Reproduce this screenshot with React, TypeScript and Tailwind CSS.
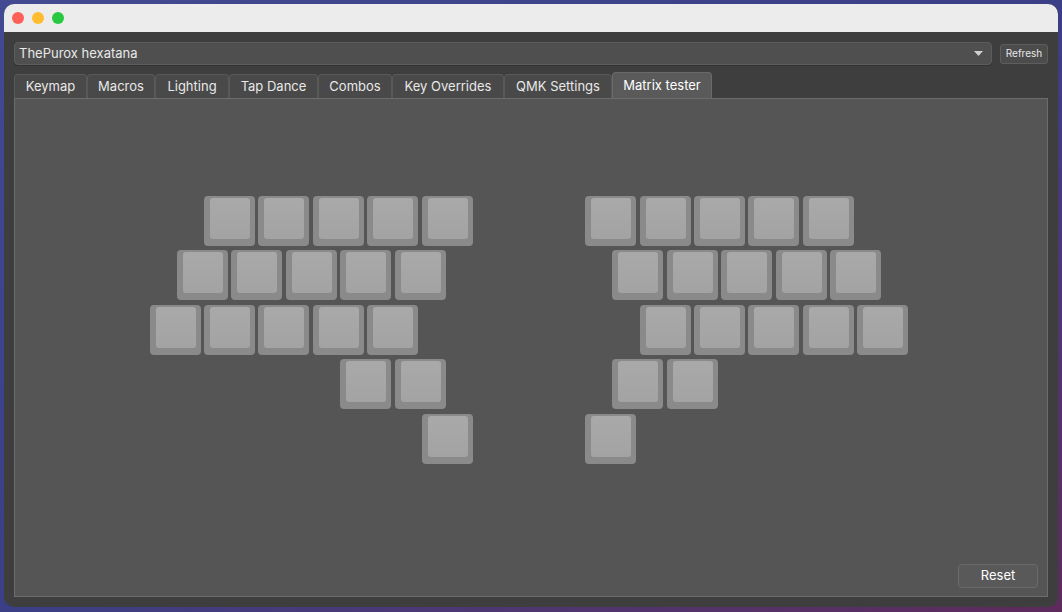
const tabs = [
  { label: "Keymap", w: "w-[73px]" },
  { label: "Macros", w: "w-[68px]" },
  { label: "Lighting", w: "w-[74px]" },
  { label: "Tap Dance", w: "w-[89px]" },
  { label: "Combos", w: "w-[74px]" },
  { label: "Key Overrides", w: "w-[112px]" },
  { label: "QMK Settings", w: "w-[108px]" },
];

const U = 54.45;

// [column in units, row]
const keys: [number, number][] = [
  [1, 0], [2, 0], [3, 0], [4, 0], [5, 0],
  [0.5, 1], [1.5, 1], [2.5, 1], [3.5, 1], [4.5, 1],
  [0, 2], [1, 2], [2, 2], [3, 2], [4, 2],
  [3.5, 3], [4.5, 3],
  [5, 4],
  [8, 0], [9, 0], [10, 0], [11, 0], [12, 0],
  [8.5, 1], [9.5, 1], [10.5, 1], [11.5, 1], [12.5, 1],
  [9, 2], [10, 2], [11, 2], [12, 2], [13, 2],
  [8.5, 3], [9.5, 3],
  [8, 4],
];

function Key({ x, y }: { x: number; y: number }) {
  return (
    <div
      className="absolute h-[50px] w-[51px] rounded-[4px] bg-[#8a8a8a] pb-[7px] pl-[6px] pr-[5px] pt-[2px]"
      style={{ left: Math.floor(x * U), top: Math.round(y * U) }}
    >
      <div className="h-full w-full rounded-[3px] bg-gradient-to-b from-[#a9a9a9] to-[#a3a3a3]" />
    </div>
  );
}

export default function App() {
  return (
    <div
      className="h-[612px] w-[1062px] overflow-hidden bg-gradient-to-br from-[#434a92] via-[#3a3f86] to-[#5e2a5c] p-[4px] text-[13px] text-[#e8e8e8]"
      style={{ fontFamily: "Inter, 'Noto Sans', sans-serif" }}
    >
      <div className="flex h-[603px] w-[1054px] flex-col overflow-hidden rounded-[10px] bg-[#3e3e3e]">
        <div className="flex h-[28px] items-center gap-[8px] bg-[#ececec] pl-[8px]">
          <span className="h-[12px] w-[12px] rounded-full bg-[#fe5f57]" />
          <span className="h-[12px] w-[12px] rounded-full bg-[#febc2e]" />
          <span className="h-[12px] w-[12px] rounded-full bg-[#28c840]" />
        </div>
        <div className="flex flex-1 flex-col px-[10px] pb-[10px] pt-[10px]">
          <div className="flex items-center gap-[8px]">
            <div className="flex h-[23px] flex-1 items-center justify-between rounded-[4px] border border-[#5c5c5c] bg-[#4f4f4f] pl-[4px] pr-[8px] shadow-[0_1px_0_#333]">
              <span>ThePurox hexatana</span>
              <svg width="9" height="5" viewBox="0 0 9 5">
                <path d="M0 0 H9 L4.5 5 Z" fill="#cfcfcf" />
              </svg>
            </div>
            <div className="flex h-[20px] w-[48px] items-center justify-center rounded-[3px] border border-[#5e5e5e] bg-[#4c4c4c] text-[10px]">
              Refresh
            </div>
          </div>
          <div className="mt-[7px] flex items-end">
            {tabs.map((t) => (
              <div
                key={t.label}
                className={`${t.w} flex h-[24px] items-center justify-center rounded-t-[4px] border border-b-0 border-[#595959] bg-[#494949] text-[13px]`}
              >
                {t.label}
              </div>
            ))}
            <div className="flex h-[26px] w-[100px] items-center justify-center rounded-t-[4px] border border-b-0 border-[#6a6a6a] bg-[#5a5a5a] text-[13px] text-white">
              Matrix tester
            </div>
          </div>
          <div className="flex flex-1 flex-col border border-[#6c6c6c] bg-[#555555]">
            <div className="flex flex-1 justify-center pr-[3px] pt-[97px]">
              <div className="relative h-[268px] w-[760px]">
                {keys.map(([x, y], i) => (
                  <Key key={i} x={x} y={y} />
                ))}
              </div>
            </div>
            <div className="flex justify-end pb-[8px] pr-[9px]">
              <div className="flex h-[24px] w-[80px] items-center justify-center rounded-[4px] border border-[#6a6a6a] bg-[#595959] text-[13px] text-white">
                Reset
              </div>
            </div>
          </div>
        </div>
      </div>
    </div>
  );
}
